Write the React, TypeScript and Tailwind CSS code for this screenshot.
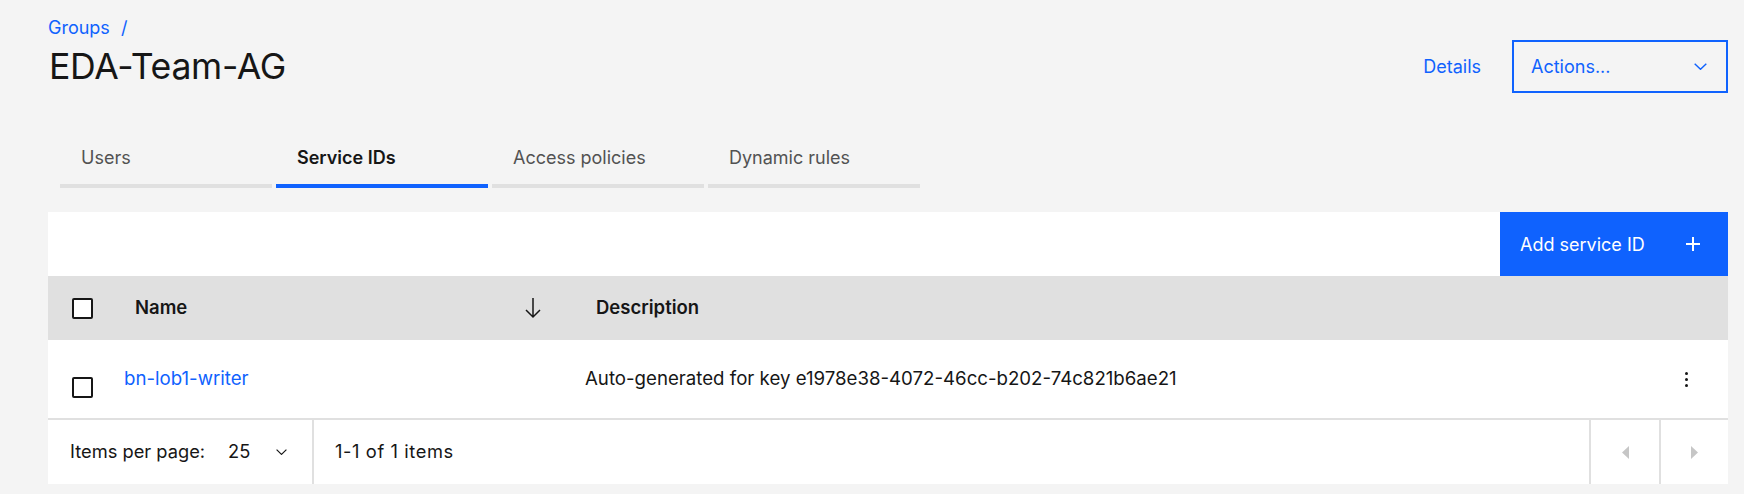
import React from "react";

function Checkbox({ className = "" }: { className?: string }) {
  return <div className={"h-[21px] w-[21px] shrink-0 rounded-[2px] border-2 border-[#161616] bg-white " + className} />;
}

function ChevronDown({ className = "", color = "#161616", w = 13, h = 7 }: { className?: string; color?: string; w?: number; h?: number }) {
  return (
    <svg width={w} height={h} viewBox="0 0 13 7" className={className} fill="none">
      <path d="M0.7 0.7 L6.5 6.3 L12.3 0.7" stroke={color} strokeWidth="1.4" />
    </svg>
  );
}

export default function App() {
  const tabs = ["Users", "Service IDs", "Access policies", "Dynamic rules"];
  return (
    <div className="min-h-[494px] w-full bg-[#f4f4f4] pl-[48px] pr-[16px] pt-[16px] text-[#161616] font-['Inter',sans-serif]">
      {/* header */}
      <div className="flex h-[75px] items-start justify-between">
        <div>
          <div className="flex h-[24px] items-center text-[18px] leading-[24px] text-[#0f62fe]">
            <span>Groups</span>
            <span className="ml-[11px]">/</span>
          </div>
          <h1 className="ml-[1px] mt-[3px] text-[35.6px] font-normal leading-[48px] tracking-[-0.3px]">EDA-Team-AG</h1>
        </div>
        <div className="mt-[24px] flex h-[53px] items-center">
          <span className="text-[18px] text-[#0f62fe]">Details</span>
          <div className="ml-[31px] flex h-[53px] w-[216px] items-center justify-between border-2 border-[#0f62fe] pl-[17px] pr-[19px]">
            <span className="text-[18px] text-[#0f62fe]">Actions...</span>
            <ChevronDown color="#0f62fe" />
          </div>
        </div>
      </div>

      {/* tabs */}
      <div className="ml-[12px] mt-[33px] flex gap-[4px]">
        {tabs.map((t, i) => (
          <div
            key={t}
            className={
              "flex h-[64px] w-[212px] items-center border-b-4 px-[21px] pt-[6px] text-[18px] " +
              (i === 1 ? "border-[#0f62fe] font-semibold text-[#161616]" : "border-[#e0e0e0] text-[#525252]")
            }
          >
            {t}
          </div>
        ))}
      </div>

      {/* table */}
      <div className="mt-[24px]">
        <div className="flex h-[64px] justify-end bg-white">
          <div className="flex w-[228px] items-center justify-between bg-[#0f62fe] pl-[20px] pr-[28px] text-white">
            <span className="text-[18px]">Add service ID</span>
            <svg width="14" height="14" viewBox="0 0 14 14" fill="none">
              <path d="M7 0 V14 M0 7 H14" stroke="white" strokeWidth="2" />
            </svg>
          </div>
        </div>

        <div className="flex h-[64px] items-center bg-[#e0e0e0] pl-[24px] text-[18.5px] font-semibold">
          <Checkbox />
          <div className="ml-[42px] w-[388px]">Name</div>
          <svg width="20" height="22" viewBox="0 0 20 22" fill="none" className="shrink-0">
            <path d="M10 1 V20 M3 13 L10 20 L17 13" stroke="#161616" strokeWidth="1.5" />
          </svg>
          <div className="ml-[53px]">Description</div>
        </div>

        <div className="flex h-[80px] items-center border-b-2 border-[#e0e0e0] bg-white pl-[24px] text-[18.67px]">
          <Checkbox className="mt-[16px]" />
          <div className="ml-[31px] w-[461px] text-[#0f62fe]">bn-lob1-writer</div>
          <div className="flex-1 text-[#161616]">Auto-generated for key e1978e38-4072-46cc-b202-74c821b6ae21</div>
          <div className="mr-[40px] flex h-[16px] flex-col items-center justify-between pt-[1px]">
            <span className="block h-[3px] w-[3px] rounded-full bg-[#161616]" />
            <span className="block h-[3px] w-[3px] rounded-full bg-[#161616]" />
            <span className="block h-[3px] w-[3px] rounded-full bg-[#161616]" />
          </div>
        </div>

        <div className="flex h-[64px] items-stretch bg-white text-[18.3px]">
          <div className="flex w-[266px] items-center border-r-2 border-[#e0e0e0] pl-[22px]">
            <span>Items per page:</span>
            <span className="ml-[23px]">25</span>
            <ChevronDown className="ml-[26px]" w={11} h={6} />
          </div>
          <div className="flex flex-1 items-center pl-[21px] tracking-[0.6px]">1-1 of 1 items</div>
          <div className="flex w-[70px] items-center justify-center border-l-2 border-[#e0e0e0]">
            <svg width="7" height="13" viewBox="0 0 6 11"><path d="M6 0 L0 5.5 L6 11 Z" fill="#c6c6c6" /></svg>
          </div>
          <div className="flex w-[69px] items-center justify-center border-l-2 border-[#e0e0e0]">
            <svg width="7" height="13" viewBox="0 0 6 11"><path d="M0 0 L6 5.5 L0 11 Z" fill="#c6c6c6" /></svg>
          </div>
        </div>
      </div>
    </div>
  );
}
